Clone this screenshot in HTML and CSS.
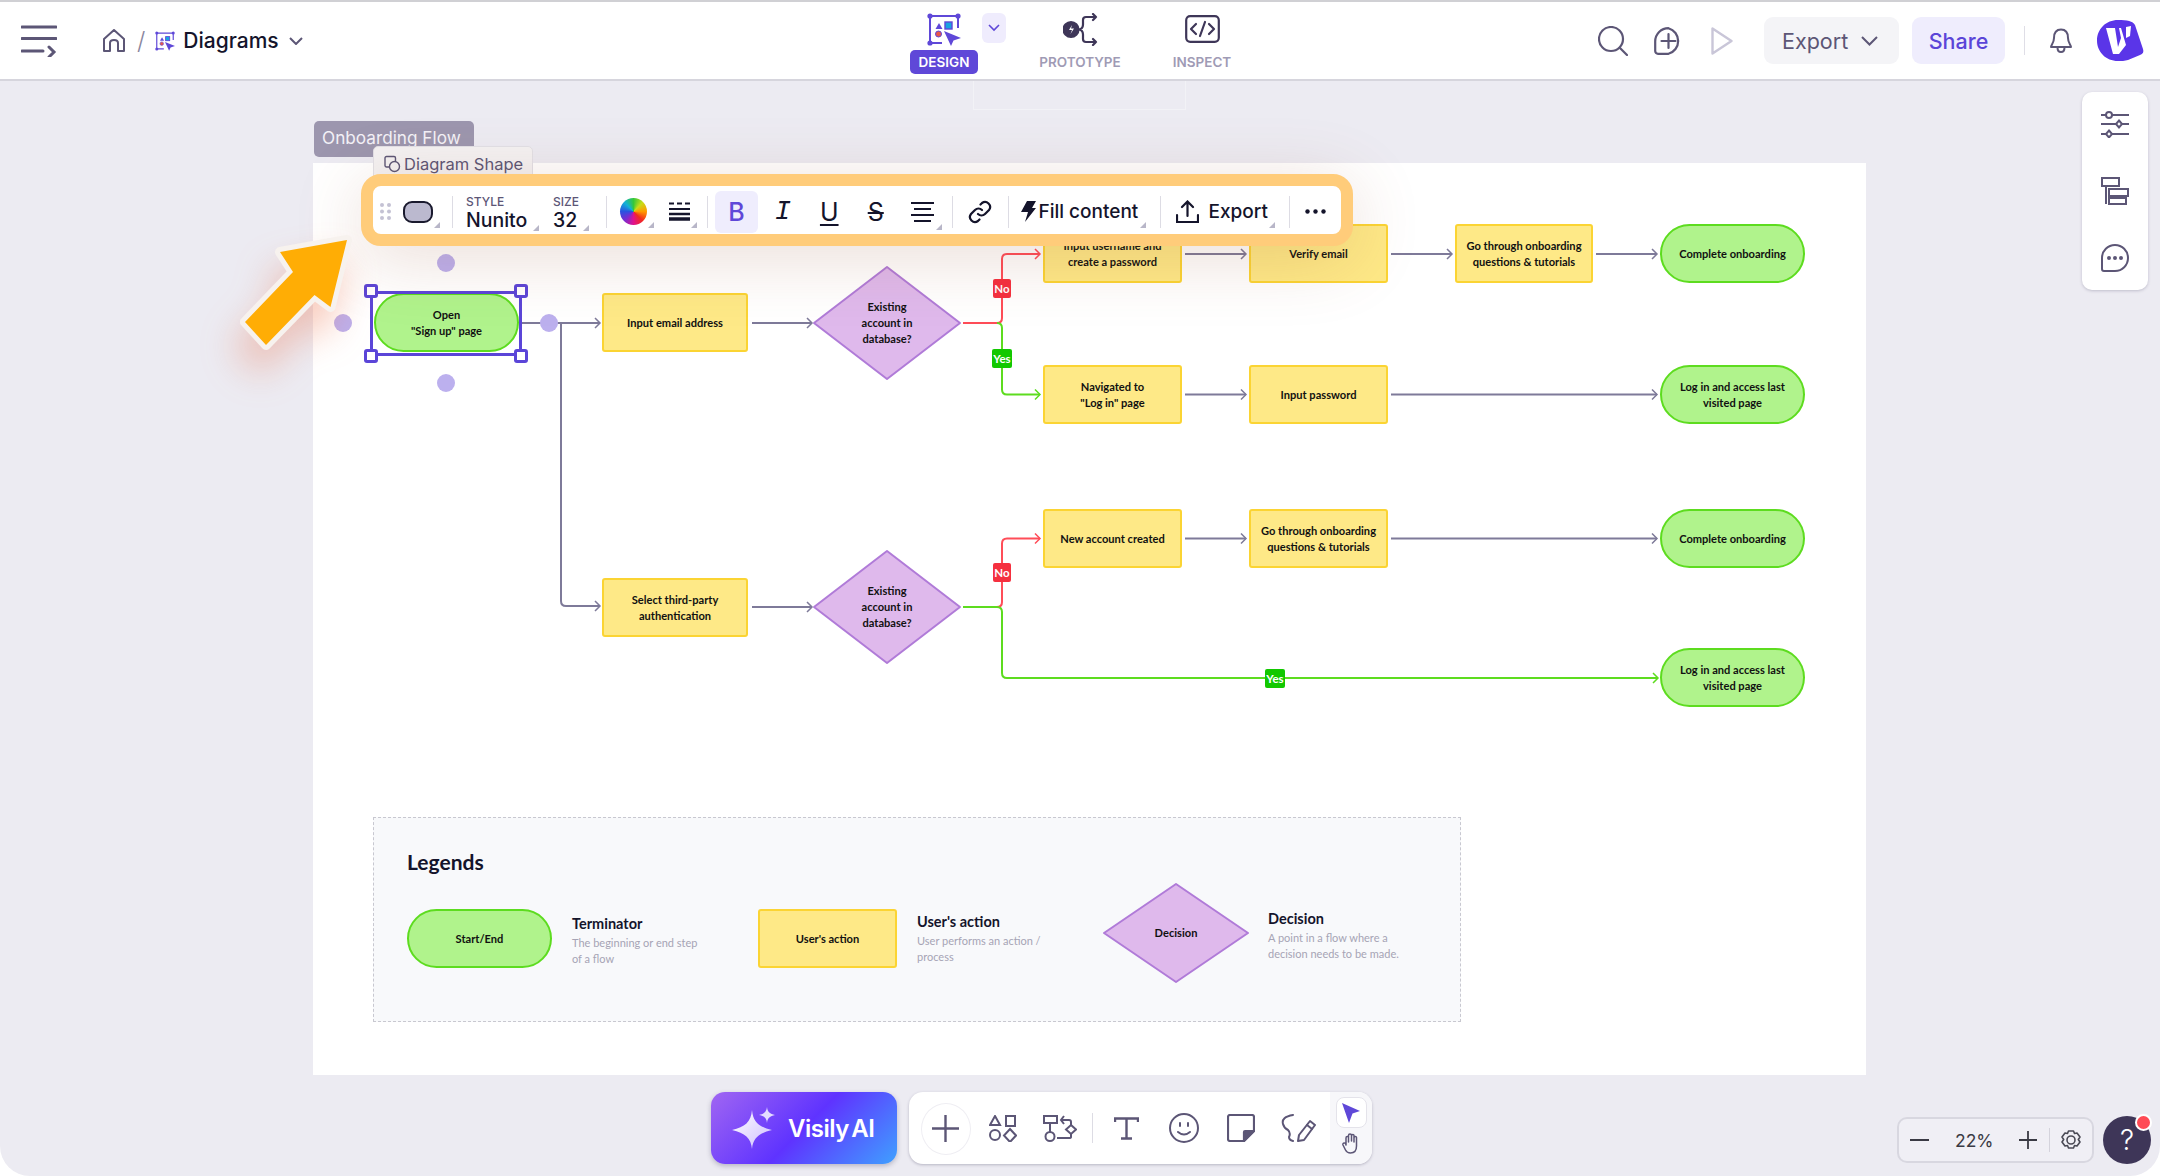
FILE: index.html
```html
<!DOCTYPE html>
<html lang="en">

<head>
    <meta charset="UTF-8">
    <meta name="viewport" content="width=device-width, initial-scale=1.0">
    <title>Onboarding Flow - Diagrams</title>
    <link rel="stylesheet" href="styles.css">
</head>

<body>
    <svg class="defs" width="0" height="0">
        <symbol id="design-mark" viewBox="0 0 34 33">
            <path d="M3 3H31M3 3V30M3 30H15M31 3V15" fill="none" stroke="#5f48d8" stroke-width="2"/>
            <circle cx="3" cy="3" r="2.6" fill="#5f48d8"/>
            <circle cx="31" cy="3" r="2.6" fill="#5f48d8"/>
            <circle cx="3" cy="30" r="2.6" fill="#5f48d8"/>
            <path d="M12 10l3.5 6h-7z" fill="#5f48d8"/>
            <rect x="18" y="9" width="7" height="7" fill="#19a4e0" stroke="#5f48d8" stroke-width="1.4"/>
            <circle cx="11.500" cy="21" r="3" fill="#e8584a" stroke="#5f48d8" stroke-width="1"/>
            <path d="M17 18l17 7-7.500 2.500L24 33z" fill="#5f48d8"/>
        </symbol>
    </svg>

    <header class="topbar">
        <div class="crumbs">
            <svg class="ic-menu" width="36" height="32" viewBox="0 0 36 32" fill="none" stroke="#5c5676" stroke-width="3" stroke-linecap="round"><path d="M1 2H35M1 13.500H35M1 26H22M28 22l5 5-5 5"/></svg>
            <svg class="ic-home" width="24" height="24" viewBox="0 0 24 24" fill="none" stroke="#5c5676" stroke-width="2" stroke-linejoin="round"><path d="M2 22V10L12 1l10 9v12h-6v-8q0-3-4-3t-4 3v8z"/></svg>
            <span class="slash">/</span>
            <svg class="ic-diagram" width="20" height="20"><use href="#design-mark"/></svg>
            <span class="crumb-title">Diagrams</span>
            <svg class="ic-down" width="14" height="8" viewBox="0 0 14 8" fill="none" stroke="#5c5676" stroke-width="2"><path d="M1 1l6 6 6-6"/></svg>
        </div>
        <nav class="tabs">
            <div class="tab tab-design">
                <svg width="34" height="33"><use href="#design-mark"/></svg>
                <span class="tab-label">DESIGN</span>
                <span class="tab-more"><svg width="12" height="8" viewBox="0 0 12 8" fill="none" stroke="#5f48d8" stroke-width="1.600"><path d="M1 1l5 5 5-5"/></svg></span>
            </div>
            <div class="tab tab-proto">
                <svg width="35" height="33" viewBox="0 0 35 33" fill="none" stroke="#3e3658" stroke-width="2.200" stroke-linecap="round" stroke-linejoin="round">
                    <path d="M15 16.500q5 0 5-5V7q0-3 3-3h10M30 1l3 3-3 3M15 16.500q5 0 5 5V26q0 3 3 3h10M30 26l3 3-3 3"/>
                    <circle cx="8" cy="16.500" r="7.500" fill="#3e3658"/>
                    <path d="M9 12l-3 5h3l-1.500 4 3.500-5.500H8z" fill="#fff" stroke="none"/>
                </svg>
                <span class="tab-label">PROTOTYPE</span>
            </div>
            <div class="tab tab-inspect">
                <svg width="35" height="28" viewBox="0 0 35 28" fill="none" stroke="#3e3658" stroke-width="2.200" stroke-linecap="round" stroke-linejoin="round">
                    <rect x="1.200" y="1.200" width="32.600" height="25.600" rx="4"/>
                    <path d="M11 9l-5 5 5 5M24 9l5 5-5 5M20 7l-5 14"/>
                </svg>
                <span class="tab-label">INSPECT</span>
            </div>
        </nav>
        <div class="actions">
            <svg width="30" height="30" viewBox="0 0 30 30" fill="none" stroke="#5c5676" stroke-width="2.200" stroke-linecap="round"><circle cx="13" cy="13" r="12"/><path d="M22 22l7 7"/></svg>
            <svg class="ic-add" width="29" height="28" viewBox="0 0 29 28" fill="none" stroke="#5c5676" stroke-width="2.200" stroke-linecap="round"><path d="M14.500 1.200a13.300 13.300 0 0 1 0 25.600H4a2.800 2.800 0 0 1-2.800-2.800V14.500A13.300 13.300 0 0 1 14.500 1.200zM14.500 7v14M7.500 14h14"/></svg>
            <svg class="ic-play" width="22" height="28" viewBox="0 0 22 28" fill="none" stroke="#c9c6d8" stroke-width="2.400" stroke-linejoin="round"><path d="M1.500 1.500v25L20.500 14z"/></svg>
            <button class="btn btn-export">Export<svg width="17" height="10" viewBox="0 0 17 10" fill="none" stroke="#5c5676" stroke-width="2"><path d="M1 1l7.500 7.500L16 1"/></svg></button>
            <button class="btn btn-share">Share</button>
            <span class="bar-divider"></span>
            <svg class="ic-bell" width="22" height="26" viewBox="0 0 22 26" fill="none" stroke="#5c5676" stroke-width="2" stroke-linejoin="round"><path d="M11 1.500c-5 0-7 4-7 8.500 0 5-3 7-3 9h20c0-2-3-4-3-9 0-4.500-2-8.500-7-8.500zM7.500 19.500c0 6 7 6 7 0"/></svg>
            <svg class="avatar" width="47" height="41" viewBox="0 0 47 41"><path d="M21 0c9 0 15 1 17 5l8 24c1 3 0 5-3 6l-12 5c-3 1-7 1-10 1C9 41 0 32 0 20.500S9 0 21 0z" fill="#5a35e8"/><path d="M9 8h9l3 19 3-9-2-10h2l5 17-7 9h-6z" fill="#fff"/><path d="M29 7l5-1-1 10-4 2z" fill="#fff"/></svg>
        </div>
    </header>

    <main class="canvas">
        <div class="board">
            <div class="tab-ghost"></div>
            <div class="paper"></div>
            <div class="frame-tag">Onboarding Flow</div>

            <svg class="wires" width="2160" height="1176" viewBox="0 0 2160 1176" fill="none">
                <defs>
                    <marker id="head-gray" markerWidth="8" markerHeight="12" refX="6" refY="6" orient="auto" markerUnits="userSpaceOnUse"><path d="M1 1l5 5-5 5" fill="none" stroke="#7e7a99" stroke-width="1.500"/></marker>
                    <marker id="head-red" markerWidth="8" markerHeight="12" refX="6" refY="6" orient="auto" markerUnits="userSpaceOnUse"><path d="M1 1l5 5-5 5" fill="none" stroke="#ff4d58" stroke-width="1.500"/></marker>
                    <marker id="head-green" markerWidth="8" markerHeight="12" refX="6" refY="6" orient="auto" markerUnits="userSpaceOnUse"><path d="M1 1l5 5-5 5" fill="none" stroke="#5ddc1f" stroke-width="1.500"/></marker>
                </defs>
                <g class="wire-gray">
                    <path d="M522 323H600" marker-end="url(#head-gray)"/>
                    <path d="M561 323V601Q561 606 566 606H600" marker-end="url(#head-gray)"/>
                    <path d="M752 323H812" marker-end="url(#head-gray)"/>
                    <path d="M752 607H812" marker-end="url(#head-gray)"/>
                    <path d="M1185 254H1246" marker-end="url(#head-gray)"/>
                    <path d="M1391 254H1452" marker-end="url(#head-gray)"/>
                    <path d="M1596 254H1657" marker-end="url(#head-gray)"/>
                    <path d="M1185 394.500H1246" marker-end="url(#head-gray)"/>
                    <path d="M1391 394.500H1657" marker-end="url(#head-gray)"/>
                    <path d="M1185 538.500H1246" marker-end="url(#head-gray)"/>
                    <path d="M1391 538.500H1657" marker-end="url(#head-gray)"/>
                </g>
                <g class="wire-red">
                    <path d="M963 323H997Q1002 323 1002 318V259Q1002 254 1007 254H1040" marker-end="url(#head-red)"/>
                    <path d="M997 607Q1002 607 1002 602V543.500Q1002 538.500 1007 538.500H1040" marker-end="url(#head-red)"/>
                </g>
                <g class="wire-green">
                    <path d="M997 323Q1002 323 1002 328V389.500Q1002 394.500 1007 394.500H1040" marker-end="url(#head-green)"/>
                    <path d="M963 607H997Q1002 607 1002 612V673Q1002 678 1007 678H1658" marker-end="url(#head-green)"/>
                </g>
                <polygon class="diamond" points="887,267 960,323 887,379 814,323"/>
                <polygon class="diamond" points="887,551 960,607 887,663 814,607"/>
            </svg>

            <div class="node pill n-open">Open<br>"Sign up" page</div>
            <div class="node box n-email">Input email address</div>
            <div class="node box n-third">Select third-party<br>authentication</div>
            <div class="node n-dia1">Existing<br>account in<br>database?</div>
            <div class="node n-dia2">Existing<br>account in<br>database?</div>

            <div class="node box col-a r1">Input username and<br>create a password</div>
            <div class="node box col-b r1">Verify email</div>
            <div class="node box col-c r1">Go through onboarding<br>questions &amp; tutorials</div>
            <div class="node pill col-end r1">Complete onboarding</div>

            <div class="node box col-a r2">Navigated to<br>"Log in" page</div>
            <div class="node box col-b r2">Input password</div>
            <div class="node pill col-end r2">Log in and access last<br>visited page</div>

            <div class="node box col-a r3">New account created</div>
            <div class="node box col-b r3">Go through onboarding<br>questions &amp; tutorials</div>
            <div class="node pill col-end r3">Complete onboarding</div>

            <div class="node pill col-end r4">Log in and access last<br>visited page</div>

            <span class="badge no b-no1">No</span>
            <span class="badge yes b-yes1">Yes</span>
            <span class="badge no b-no2">No</span>
            <span class="badge yes b-yes2">Yes</span>

            <div class="selection">
                <i class="handle h-tl"></i><i class="handle h-tr"></i><i class="handle h-bl"></i><i class="handle h-br"></i>
            </div>
            <i class="port p-top"></i><i class="port p-left"></i><i class="port p-right"></i><i class="port p-bottom"></i>

            <section class="legend">
                <h2>Legends</h2>
                <div class="legend-row">
                    <div class="legend-item item-term">
                        <div class="node-static pill">Start/End</div>
                        <div class="legend-text">
                            <h4>Terminator</h4>
                            <p>The beginning or end step<br>of a flow</p>
                        </div>
                    </div>
                    <div class="legend-item item-action">
                        <div class="node-static box">User's action</div>
                        <div class="legend-text">
                            <h4>User's action</h4>
                            <p>User performs an action /<br>process</p>
                        </div>
                    </div>
                    <div class="legend-item item-decision">
                        <div class="legend-diamond">
                            <svg width="146" height="100" viewBox="0 0 146 100"><polygon class="diamond" points="73,1 145,50 73,99 1,50"/></svg>
                            <span>Decision</span>
                        </div>
                        <div class="legend-text">
                            <h4>Decision</h4>
                            <p>A point in a flow where a<br>decision needs to be made.</p>
                        </div>
                    </div>
                </div>
            </section>

            <div class="shape-tag">
                <svg width="17" height="18" viewBox="0 0 17 18" fill="none" stroke="#5c5676" stroke-width="1.400"><path d="M6 12H2.500A1.500 1.500 0 0 1 1 10.500V3a1.500 1.500 0 0 1 1.500-1.500H10A1.500 1.500 0 0 1 11.500 3v3"/><circle cx="10.500" cy="11.500" r="5"/></svg>
                <span>Diagram Shape</span>
            </div>

            <div class="toolbar">
                <svg class="grip" width="11" height="17" viewBox="0 0 11 17" fill="#c4c2d4"><circle cx="2" cy="2" r="2"/><circle cx="9" cy="2" r="2"/><circle cx="2" cy="8.500" r="2"/><circle cx="9" cy="8.500" r="2"/><circle cx="2" cy="15" r="2"/><circle cx="9" cy="15" r="2"/></svg>
                <span class="shape-swatch"></span>
                <i class="caret caret-shape"></i>
                <span class="tb-divider div-shape"></span>
                <div class="field field-style"><label>STYLE</label><b>Nunito</b><i class="caret"></i></div>
                <div class="field field-size"><label>SIZE</label><b>32</b><i class="caret"></i></div>
                <span class="tb-divider"></span>
                <span class="wheel"></span>
                <i class="caret caret-wheel"></i>
                <svg class="ic-lines" width="21" height="19" viewBox="0 0 21 19" fill="none" stroke="#14142b"><path d="M0 1.500H5M8 1.500H13M16 1.500H21" stroke-width="2"/><path d="M0 7H21" stroke-width="2"/><path d="M0 12H21" stroke-width="2.500"/><path d="M0 17H21" stroke-width="3.500"/></svg>
                <i class="caret"></i>
                <span class="tb-divider div-lines"></span>
                <span class="tool tool-on">B</span>
                <span class="tool tool-i">I</span>
                <span class="tool tool-u">U</span>
                <span class="tool tool-s">S</span>
                <span class="tool tool-align">
                    <svg width="23" height="21" viewBox="0 0 23 21" fill="none" stroke="#14142b" stroke-width="2.200"><path d="M0 2H23M3 8H20M0 14H23M3 20H20"/></svg>
                    <i class="caret"></i>
                </span>
                <span class="tb-divider div-align"></span>
                <span class="tool tool-link">
                    <svg width="24" height="24" viewBox="0 0 24 24" fill="none" stroke="#14142b" stroke-width="2.200" stroke-linecap="round"><path d="M10 14a5 5 0 0 0 7 0l4-4a5 5 0 0 0-7-7l-1.500 1.500"/><path d="M14 10a5 5 0 0 0-7 0l-4 4a5 5 0 0 0 7 7l1.500-1.500"/></svg>
                </span>
                <span class="tb-divider"></span>
                <svg class="ic-bolt" width="15" height="21" viewBox="0 0 15 21" fill="#14142b"><path d="M6 0h9l-4 7h4L4 21l3-10H0z"/></svg>
                <span class="tb-text tb-fill">Fill content</span>
                <i class="caret"></i>
                <span class="tb-divider div-fill"></span>
                <svg class="ic-upload" width="23" height="23" viewBox="0 0 23 23" fill="none" stroke="#14142b" stroke-width="2.200" stroke-linecap="round"><path d="M11.500 16V2M6 7l5.500-5.500L17 7M1 15v7h21v-7"/></svg>
                <span class="tb-text tb-export">Export</span>
                <i class="caret"></i>
                <span class="tb-divider div-export"></span>
                <svg class="ic-dots" width="21" height="5" viewBox="0 0 21 5" fill="#14142b"><circle cx="2.500" cy="2.500" r="2.200"/><circle cx="10.500" cy="2.500" r="2.200"/><circle cx="18.500" cy="2.500" r="2.200"/></svg>
            </div>

            <svg class="pointer" width="130" height="130" viewBox="235 230 130 130"><path d="M347 240L280 252L293 272L245 322L266 345L314.500 295L330.500 307Z" fill="#ffad05" stroke="#f7f2ee" stroke-width="10" stroke-linejoin="round" paint-order="stroke"/></svg>
        </div>

        <aside class="side-panel">
            <svg width="28" height="28" viewBox="0 0 28 28" fill="none" stroke="#5c5676" stroke-width="2"><path d="M0 5H5M11 5H28M0 14H15M21 14H28M0 24H5M11 24H28"/><circle cx="8" cy="5" r="3"/><path d="M18 10.500l3 3.500-3 3.500-3-3.500z"/><path d="M8 20.500l3 3.500-3 3.500-3-3.500z"/></svg>
            <svg width="28" height="28" viewBox="0 0 28 28" fill="none" stroke="#5c5676" stroke-width="2"><rect x="1" y="1" width="17" height="8"/><path d="M5 9V27"/><rect x="8" y="12" width="19" height="7"/><rect x="8" y="21" width="17" height="6"/></svg>
            <svg width="28" height="28" viewBox="0 0 28 28" fill="none" stroke="#5c5676" stroke-width="2"><path d="M14 1a13 13 0 0 1 0 26H3a2 2 0 0 1-2-2V14A13 13 0 0 1 14 1z"/><circle cx="8" cy="14" r="1" fill="#5c5676"/><circle cx="14" cy="14" r="1" fill="#5c5676"/><circle cx="20" cy="14" r="1" fill="#5c5676"/></svg>
        </aside>

        <div class="dock">
            <button class="ai-btn">
                <svg width="44" height="42" viewBox="0 0 44 42">
                    <defs><linearGradient id="star" x1="0" y1="0" x2="1" y2="1"><stop offset="0" stop-color="#fff"/><stop offset="1" stop-color="#cdbcff"/></linearGradient></defs>
                    <path d="M20 3C21 15 27 20 40 23C27 26 21 31 20 42C19 31 13 26 0 23C13 20 19 15 20 3Z" fill="url(#star)"/>
                    <path d="M35 0C35.500 5 38 7 43 8C38 9 35.500 11 35 16C34.500 11 32 9 27 8C32 7 34.500 5 35 0Z" fill="#e4dcff"/>
                </svg>
                Visily AI
            </button>
            <div class="draw-bar">
                <span class="draw-tool tool-plus"><svg width="27" height="27" viewBox="0 0 27 27" stroke="#5c5676" stroke-width="2.400"><path d="M13.500 0V27M0 13.500H27"/></svg></span>
                <span class="draw-tool"><svg width="28" height="27" viewBox="0 0 28 27" fill="none" stroke="#5c5676" stroke-width="2"><path d="M6 1l5 9H1z"/><rect x="17" y="1" width="9" height="10"/><circle cx="6" cy="20" r="5"/><path d="M21 14l6 6.500-6 6.500-6-6.500z"/></svg></span>
                <span class="draw-tool"><svg width="34" height="27" viewBox="0 0 34 27" fill="none" stroke="#5c5676" stroke-width="2"><rect x="1" y="1" width="13" height="7"/><path d="M7 8v9"/><circle cx="7" cy="21.500" r="4.500"/><path d="M18 5h8q2 0 2 2v4M21 1l-3 4 3 4"/><path d="M28 10l5 4.500-5 4.500-5-4.500zM28 19v3q0 1-2 1h-12"/></svg></span>
                <span class="draw-sep"></span>
                <span class="draw-tool"><svg width="25" height="23" viewBox="0 0 25 23" fill="none" stroke="#5c5676" stroke-width="2.400"><path d="M1 5V1.500H24V5M12.500 1.500V21.500M7 21.500H18"/></svg></span>
                <span class="draw-tool"><svg width="30" height="30" viewBox="0 0 30 30" fill="none" stroke="#5c5676" stroke-width="2" stroke-linecap="round"><circle cx="15" cy="15" r="14"/><path d="M11 10v3M19 10v3M9 19q6 5 12 0"/></svg></span>
                <span class="draw-tool"><svg width="28" height="28" viewBox="0 0 28 28" fill="none" stroke="#5c5676" stroke-width="2.200" stroke-linejoin="round"><path d="M27 17V3a2 2 0 0 0-2-2H3a2 2 0 0 0-2 2v22a2 2 0 0 0 2 2h14z"/><path d="M27 17H18a1 1 0 0 0-1 1v9z" fill="#5c5676"/></svg></span>
                <span class="draw-tool"><svg width="36" height="28" viewBox="0 0 36 28" fill="none" stroke="#5c5676" stroke-width="2" stroke-linecap="round" stroke-linejoin="round"><path d="M13 1Q1 3 3 10q1 4 5 6 3 3 1 7 0 3 4 4"/><path d="M30 7l5 4-11 15-6 1 1-6z"/><path d="M27 11l5 4"/></svg></span>
                <div class="mode-col">
                    <span class="mode-on"><svg width="18" height="20" viewBox="0 0 18 20" fill="#5f48d8"><path d="M0 0l18 8-7.500 2.500L7 20z"/></svg></span>
                    <svg width="18" height="21" viewBox="0 0 18 21" fill="none" stroke="#5c5676" stroke-width="1.500" stroke-linecap="round" stroke-linejoin="round"><path d="M4 12V5q0-1.500 1.300-1.500T6.500 5v4M6.500 8V2.500Q6.500 1 8 1t1.500 1.500V8M9.500 8V3q0-1.500 1.300-1.500T12 3v6M12 9V5q0-1.500 1.300-1.500T14.500 5v8q0 7-6 7-3.500 0-5-3L1 12q-.5-1.500 1-2t2 2"/></svg>
                </div>
            </div>
        </div>

        <div class="zoom-box">
            <span class="z-minus"></span>
            <span class="z-value">22%</span>
            <svg class="z-plus" width="18" height="18" viewBox="0 0 18 18" stroke="#3a3a44" stroke-width="1.800"><path d="M9 0V18M0 9H18"/></svg>
            <span class="z-sep"></span>
            <svg width="22" height="22" viewBox="0 0 22 22" fill="none" stroke="#4a4a55" stroke-width="1.600" stroke-linejoin="round"><path d="M8.500 1h5l1 2.500 2.500-.5 3 4-1.700 2.500 1.700 2.500-3 4-2.500-.5-1 2.500h-5l-1-2.500-2.500.5-3-4L3.700 9.500 2 7l3-4 2.500.5z" transform="translate(0 1)"/><circle cx="11" cy="11" r="4"/></svg>
        </div>
        <button class="help">?<i></i></button>
    </main>
</body>

</html>
```

FILE: styles.css
```css
* {
    box-sizing: border-box;
}

body {
    margin: 0;
    width: 2160px;
    height: 1176px;
    overflow: hidden;
    background-color: #ffffff;
    font-family: Inter, "Noto Sans", sans-serif;
    color: #14142b;
}

.defs {
    position: absolute;
}

/* top bar */

.topbar {
    display: grid;
    grid-template-columns: 910px 1fr auto;
    height: 81px;
    border-top: 2px solid #d0d0d4;
    border-bottom: 2px solid #d6d5dd;
    background-color: #ffffff;
}

.crumbs {
    display: flex;
    align-items: center;
    padding-left: 21px;
}

.ic-home {
    margin-left: 45px;
}

.slash {
    margin-left: 11px;
    font-size: 24px;
    font-weight: 300;
    color: #8a869e;
}

.ic-diagram {
    margin-left: 10px;
}

.crumb-title {
    margin-left: 8px;
    font-size: 21px;
    font-weight: 500;
}

.ic-down {
    margin-left: 10px;
}

.tabs {
    display: flex;
    align-items: flex-start;
    padding-top: 11px;
}

.tab {
    position: relative;
    display: flex;
    flex-direction: column;
    align-items: center;
    height: 61px;
}

.tab svg {
    flex: none;
}

.tab-label {
    margin-top: auto;
    font-size: 13.500px;
    font-weight: 600;
    line-height: 24px;
    color: #9f9bb5;
}

.tab-design {
    width: 68px;
}

.tab-design .tab-label {
    width: 68px;
    text-align: center;
    border-radius: 5px;
    background-color: #5f48d8;
    color: #ffffff;
}

.tab-more {
    position: absolute;
    left: 72px;
    top: 0;
    display: flex;
    align-items: center;
    justify-content: center;
    width: 24px;
    height: 30px;
    border-radius: 6px;
    background-color: #efecfd;
}

.tab-proto {
    width: 84px;
    margin-left: 60px;
}

.tab-inspect {
    width: 60px;
    margin-left: 50px;
}

.tab-inspect svg {
    margin-top: 2px;
}

.actions {
    display: flex;
    align-items: center;
    padding-right: 16px;
}

.ic-add {
    margin-left: 26px;
}

.ic-play {
    margin-left: 28px;
}

.btn {
    height: 47px;
    border: 0;
    border-radius: 9px;
    font-family: inherit;
    font-size: 21.500px;
}

.btn-export {
    display: flex;
    align-items: center;
    gap: 13px;
    width: 135px;
    margin-left: 31px;
    padding-left: 18px;
    background-color: #f4f4f7;
    color: #5c5676;
}

.btn-share {
    width: 93px;
    margin-left: 13px;
    background-color: #efedfd;
    color: #5b45d8;
    font-weight: 500;
}

.bar-divider {
    width: 1px;
    height: 29px;
    margin-left: 19px;
    background-color: #dfdee6;
}

.ic-bell {
    margin-left: 25px;
}

.avatar {
    margin-left: 25px;
}

/* canvas */

.canvas {
    position: relative;
    height: 1095px;
    border-radius: 0 0 30px 30px;
    background-color: #ecebf2;
    overflow: hidden;
}

.board {
    position: absolute;
    left: 0;
    top: -81px;
    width: 2160px;
    height: 1176px;
}

.tab-ghost {
    position: absolute;
    left: 973px;
    top: 80px;
    width: 213px;
    height: 30px;
    border: 1px solid rgba(255, 255, 255, 0.35);
    border-top: 0;
}

.paper {
    position: absolute;
    left: 313px;
    top: 163px;
    width: 1553px;
    height: 912px;
    background-color: #ffffff;
}

.frame-tag {
    position: absolute;
    left: 314px;
    top: 121px;
    width: 160px;
    height: 36px;
    padding: 6px 0 0 8px;
    border-radius: 5px;
    background-color: #9c96ae;
    color: #f3f1f7;
    font-size: 17.200px;
    line-height: 21px;
}

.shape-tag {
    position: absolute;
    left: 373px;
    top: 146px;
    display: flex;
    align-items: center;
    gap: 3px;
    width: 160px;
    height: 34px;
    padding: 2px 0 0 10px;
    border: 1px solid #e2e0e6;
    border-radius: 5px 5px 0 0;
    background-color: #f4f2f3;
    color: #5c5676;
    font-size: 16.500px;
    white-space: nowrap;
}

/* diagram */

.wires {
    position: absolute;
    left: 0;
    top: 0;
}

.wire-gray path {
    stroke: #7e7a99;
    stroke-width: 2;
}

.wire-red path {
    stroke: #ff4d58;
    stroke-width: 2;
}

.wire-green path {
    stroke: #5ddc1f;
    stroke-width: 2;
}

.diamond {
    fill: #dfb9ec;
    stroke: #b07bd8;
    stroke-width: 2;
    stroke-linejoin: round;
}

.node,
.node-static,
.legend-diamond span {
    font-family: Lato, "Noto Sans", sans-serif;
    font-size: 11.100px;
    font-weight: 700;
    line-height: 16px;
    text-align: center;
    color: #111111;
}

.node {
    position: absolute;
    display: flex;
    align-items: center;
    justify-content: center;
    height: 59px;
}

.box {
    border: 2px solid #fbd433;
    border-radius: 3px;
    background-color: #fee987;
}

.pill {
    border: 2px solid #5ddc1f;
    border-radius: 30px;
    background-color: #b0f38c;
}

.col-a { left: 1043px; width: 139px; }
.col-b { left: 1249px; width: 139px; }
.col-c { left: 1455px; width: 138px; }
.col-end { left: 1660px; width: 145px; }

.r1 { top: 224px; }
.r2 { top: 365px; }
.r3 { top: 509px; }
.r4 { top: 648px; }

.n-open { left: 374px; top: 293px; width: 145px; }
.n-email { left: 602px; top: 293px; width: 146px; }
.n-third { left: 602px; top: 578px; width: 146px; }
.n-dia1 { left: 814px; top: 293px; width: 146px; }
.n-dia2 { left: 814px; top: 577px; width: 146px; }

.badge {
    position: absolute;
    height: 19px;
    border-radius: 2px;
    font-family: Lato, "Noto Sans", sans-serif;
    font-size: 11.500px;
    font-weight: 700;
    line-height: 19px;
    text-align: center;
    color: #ffffff;
}

.badge.no {
    width: 18px;
    background-color: #f5303f;
}

.badge.yes {
    width: 20px;
    background-color: #12c800;
}

.b-no1 { left: 993px; top: 279px; }
.b-yes1 { left: 992px; top: 349px; }
.b-no2 { left: 993px; top: 563px; }
.b-yes2 { left: 1265px; top: 669px; }

.selection {
    position: absolute;
    left: 370px;
    top: 291px;
    width: 152px;
    height: 65px;
    border: 3px solid #5b45d8;
}

.handle {
    position: absolute;
    width: 14px;
    height: 14px;
    border: 3px solid #5b45d8;
    border-radius: 3px;
    background-color: #ffffff;
}

.h-tl { left: -9px; top: -10px; }
.h-tr { right: -9px; top: -10px; }
.h-bl { left: -9px; bottom: -10px; }
.h-br { right: -9px; bottom: -10px; }

.port {
    position: absolute;
    width: 18px;
    height: 18px;
    border-radius: 50%;
    background-color: #bcb0ee;
}

.p-top { left: 437px; top: 254px; }
.p-left { left: 334px; top: 314px; }
.p-right { left: 540px; top: 314px; }
.p-bottom { left: 437px; top: 374px; }

/* legend */

.legend {
    position: absolute;
    left: 373px;
    top: 817px;
    width: 1088px;
    height: 205px;
    padding: 31px 0 0 33px;
    border: 1px dashed #c8c8d0;
    background-color: #f8f9fb;
}

.legend h2 {
    margin: 0;
    font-family: Lato, "Noto Sans", sans-serif;
    font-size: 21px;
    font-weight: 700;
    line-height: 26px;
}

.legend-row {
    display: flex;
    margin-top: 34px;
}

.legend-item {
    display: flex;
    align-items: center;
    gap: 20px;
    height: 59px;
}

.item-term {
    width: 351px;
}

.item-term .legend-text {
    margin-top: 4px;
}

.item-action {
    width: 345px;
}

.item-decision {
    margin-top: -6px;
    gap: 19px;
}

.item-decision .legend-text {
    margin-top: 6px;
}

.node-static {
    display: flex;
    align-items: center;
    justify-content: center;
    width: 145px;
    height: 59px;
    flex: none;
}

.item-action .node-static {
    width: 139px;
}

.legend-diamond {
    display: grid;
    place-items: center;
    flex: none;
}

.legend-diamond > * {
    grid-area: 1 / 1;
}

.legend-text h4 {
    margin: 0 0 1px;
    font-family: Lato, "Noto Sans", sans-serif;
    font-size: 14.500px;
    font-weight: 700;
    line-height: 20px;
}

.legend-text p {
    margin: 0;
    font-family: Lato, "Noto Sans", sans-serif;
    font-size: 11px;
    line-height: 16px;
    color: #a6a4b5;
}

/* format toolbar */

.toolbar {
    position: absolute;
    left: 361px;
    top: 174px;
    display: flex;
    align-items: center;
    width: 992px;
    height: 72px;
    padding: 3px 0 0 7px;
    border: 12px solid #ffcc7a;
    border-radius: 20px;
    background-color: #ffffff;
    box-shadow: 0 12px 70px rgba(150, 80, 50, 0.2);
}

.grip {
    flex: none;
}

.shape-swatch {
    width: 30px;
    height: 22px;
    margin-left: 12px;
    border: 2px solid #1a1a2e;
    border-radius: 9px;
    background-color: #bbb9cf;
}

.caret {
    flex: none;
    width: 0;
    height: 0;
    align-self: flex-end;
    margin: 0 0 6px 1px;
    border-left: 6px solid transparent;
    border-bottom: 6px solid #b8b6c8;
}

.tb-divider {
    flex: none;
    width: 1px;
    height: 32px;
    background-color: #dddce4;
}

.div-shape { margin-left: 12px; }
.div-lines { margin-left: 10px; }
.div-align { margin-left: 6px; }
.div-fill { margin-left: 14px; }
.div-export { margin-left: 14px; }

.field {
    position: relative;
    display: flex;
    flex-direction: column;
    padding-top: 3px;
    line-height: 1;
}

.field label {
    font-size: 12px;
    font-weight: 500;
    color: #5c5676;
}

.field b {
    margin-top: 3px;
    font-size: 19.500px;
    font-weight: 500;
}

.field .caret {
    position: absolute;
    bottom: -1px;
    margin: 0;
}

.field-style {
    width: 87px;
    margin-left: 13px;
}

.field-style .caret {
    left: 67px;
}

.field-size {
    width: 53px;
}

.field-size .caret {
    left: 30px;
}

.wheel {
    flex: none;
    width: 27px;
    height: 27px;
    margin-left: 13px;
    border-radius: 50%;
    background: conic-gradient(#35c83a, #c8dc18, #ff9a00, #f22a1f, #e0118c, #7a2bd0, #2a52e0, #12b0d8, #35c83a);
}

.caret-wheel {
    margin-right: 15px;
}

.tool {
    position: relative;
    flex: none;
    display: flex;
    align-items: center;
    justify-content: center;
    width: 46.500px;
    height: 42px;
    font-size: 25px;
}

.tool .caret {
    position: absolute;
    right: 4px;
    bottom: 0;
    margin: 0 0 3px;
}

.tool-on {
    width: 43px;
    margin-left: 7px;
    margin-right: 1.500px;
    border-radius: 6px;
    background-color: #efedfd;
    color: #5f48d8;
    font-weight: 500;
}

.tool-i {
    font-family: "Liberation Mono", monospace;
    font-style: italic;
    font-size: 27px;
}

.tool-u {
    font-weight: 400;
    text-decoration: underline;
    text-underline-offset: 3px;
    text-decoration-thickness: 2px;
}

.tool-s {
    font-weight: 400;
    text-decoration: line-through;
    text-decoration-thickness: 2px;
}

.tool-link {
    width: 55px;
}

.ic-bolt {
    flex: none;
    margin-left: 12px;
}

.tb-text {
    font-size: 19px;
    font-weight: 500;
    white-space: nowrap;
}

.tb-fill {
    width: 100px;
    margin-left: 3px;
}

.ic-upload {
    flex: none;
    margin-left: 15px;
}

.tb-export {
    width: 59px;
    margin-left: 10px;
}

.ic-dots {
    flex: none;
    margin-left: 15px;
}

.pointer {
    position: absolute;
    left: 235px;
    top: 230px;
    overflow: visible;
    filter: drop-shadow(-6px 24px 18px rgba(235, 110, 70, 0.35));
}

/* floating panels */

.side-panel {
    position: absolute;
    left: 2082px;
    top: 11px;
    display: flex;
    flex-direction: column;
    align-items: center;
    gap: 39px;
    width: 66px;
    height: 198px;
    padding-top: 18px;
    border-radius: 10px;
    background-color: #ffffff;
    box-shadow: 0 1px 3px rgba(60, 55, 90, 0.25);
}

.dock {
    position: absolute;
    left: 711px;
    top: 1011px;
    display: flex;
    gap: 12px;
}

.ai-btn {
    display: flex;
    align-items: center;
    gap: 12px;
    width: 186px;
    height: 72px;
    padding: 0 0 0 21px;
    border: 0;
    border-radius: 14px;
    background: linear-gradient(135deg, #a066f2 0%, #5f33ff 50%, #3fa0ff 100%);
    box-shadow: 0 2px 5px rgba(60, 55, 90, 0.3);
    color: #ffffff;
    font-family: inherit;
    font-size: 24px;
    font-weight: 600;
    letter-spacing: -0.5px;
    word-spacing: -3px;
    white-space: nowrap;
}

.draw-bar {
    display: flex;
    align-items: center;
    width: 463px;
    height: 72px;
    padding-left: 8px;
    border-radius: 14px;
    background-color: #ffffff;
    box-shadow: 0 1px 3px rgba(60, 55, 90, 0.3);
    overflow: hidden;
}

.draw-tool {
    flex: none;
    display: flex;
    align-items: center;
    justify-content: center;
    width: 57px;
}

.tool-plus {
    position: relative;
}

.tool-plus::before {
    content: "";
    position: absolute;
    left: 4px;
    top: -12px;
    width: 48px;
    height: 50px;
    border: 1px solid #efeef3;
    border-radius: 50%;
}

.draw-sep {
    flex: none;
    width: 1px;
    height: 30px;
    margin: 0 5px 0 4px;
    background-color: #dddce4;
}

.mode-col {
    display: flex;
    flex-direction: column;
    align-items: center;
    gap: 5px;
    width: 42px;
    height: 72px;
    margin-left: 4px;
    padding-top: 5px;
    background-color: #f7f7fa;
}

.mode-on {
    display: flex;
    align-items: center;
    justify-content: center;
    width: 31px;
    height: 31px;
    border: 1px solid #e4e3ea;
    border-radius: 8px;
    background-color: #ffffff;
}

.zoom-box {
    position: absolute;
    left: 1897px;
    top: 1036px;
    display: flex;
    align-items: center;
    width: 197px;
    height: 46px;
    padding-left: 11px;
    border: 2px solid #d8d7e0;
    border-radius: 10px;
    background-color: #f0eff5;
    color: #3a3a44;
}

.z-minus {
    width: 19px;
    height: 2px;
    background-color: #3a3a44;
}

.z-value {
    margin-left: 26px;
    font-size: 17.500px;
}

.z-plus {
    margin-left: 25px;
}

.z-sep {
    width: 1px;
    height: 24px;
    margin: 0 10px 0 12px;
    background-color: #d4d3dc;
}

.help {
    position: absolute;
    left: 2103px;
    top: 1035px;
    width: 48px;
    height: 48px;
    padding: 0;
    border: 0;
    border-radius: 50%;
    background-color: #3e3658;
    color: #ffffff;
    font-family: inherit;
    font-size: 28px;
    font-weight: 300;
}

.help i {
    position: absolute;
    right: -1px;
    top: -2px;
    width: 17px;
    height: 17px;
    border: 2px solid #ffffff;
    border-radius: 50%;
    background-color: #ff4a55;
}
```
